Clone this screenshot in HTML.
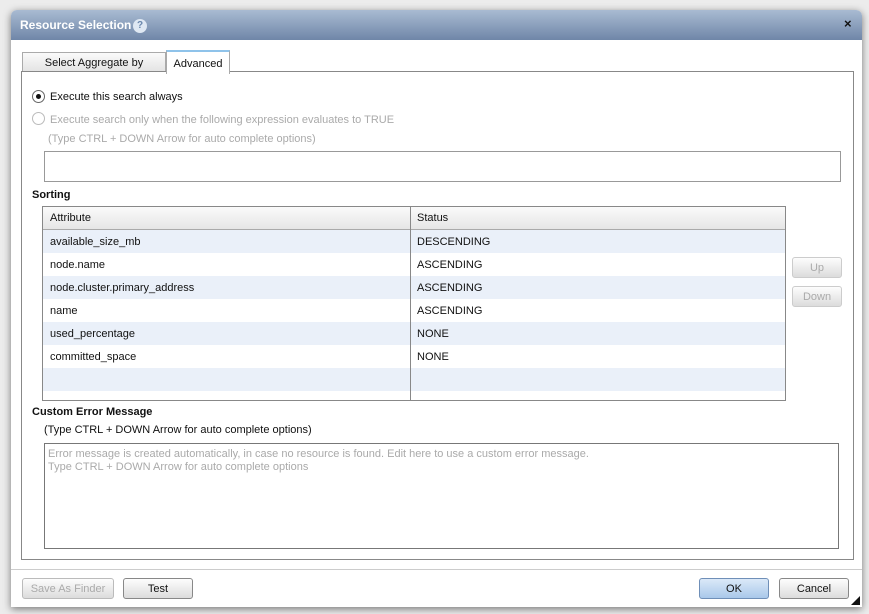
<!DOCTYPE html>
<html><head><style>
body{margin:0;width:869px;height:614px;background:#ececec;font-family:"Liberation Sans",Arial,sans-serif;font-size:11px;color:#111;position:relative;overflow:hidden}
.a{position:absolute}
.dlg{left:11px;top:10px;width:851px;height:597px;background:#fff;border-radius:6px 6px 0 0;box-shadow:0 2px 8px rgba(0,0,0,.5)}
.title{left:11px;top:10px;width:851px;height:30px;border-radius:6px 6px 0 0;background:linear-gradient(#a9bbd2,#6f86a8);color:#fff;font-weight:bold;font-size:12px}
.btn{position:absolute;height:19px;border:1px solid #888;border-radius:3px;background:linear-gradient(#fdfdfd,#dcdcdc);text-align:center;line-height:20px;font-size:11px}
.row{position:absolute;left:43px;width:742px;height:23px;line-height:24px}
.row span{position:absolute}
.gray{color:#aaa}
</style></head><body>
<div class="a dlg"></div>
<div class="a title"><span class="a" style="left:9px;top:8px">Resource Selection</span>
<span class="a" style="left:122px;top:9px;width:14px;height:14px;border-radius:50%;background:#dfe8f3;color:#6a87ad;font-size:10px;text-align:center;line-height:14px">?</span>
<span class="a" style="left:833px;top:6px;color:#111;font-size:13px">×</span></div>
<div class="a" style="left:22px;top:52px;width:142px;height:18px;border:1px solid #aaa;border-bottom:none;background:linear-gradient(#fafafa,#e4e4e4);text-align:center;line-height:20px">Select Aggregate by</div>
<div class="a" style="left:166px;top:50px;width:62px;height:22px;border:1px solid #aaa;border-top:2px solid #8fc3ea;border-bottom:none;background:#fff;text-align:center;line-height:24px;z-index:2">Advanced</div>
<div class="a" style="left:21px;top:71px;width:831px;height:487px;border:1px solid #888"></div>
<div class="a" style="left:32px;top:90px;width:11px;height:11px;border:1px solid #666;border-radius:50%;background:#fff"><div class="a" style="left:3px;top:3px;width:5px;height:5px;border-radius:50%;background:#111"></div></div>
<div class="a" style="left:50px;top:91px">Execute this search always</div>
<div class="a" style="left:32px;top:112px;width:11px;height:11px;border:1px solid #bbb;border-radius:50%"></div>
<div class="a gray" style="left:50px;top:114px">Execute search only when the following expression evaluates to TRUE</div>
<div class="a gray" style="left:48px;top:133px">(Type CTRL + DOWN Arrow for auto complete options)</div>
<div class="a" style="left:44px;top:151px;width:795px;height:29px;border:1px solid #999"></div>
<div class="a" style="left:32px;top:189px;font-weight:bold">Sorting</div>
<div class="a" style="left:42px;top:206px;width:742px;height:193px;border:1px solid #888;background:#fff"></div>
<div class="a" style="left:43px;top:207px;width:742px;height:22px;background:linear-gradient(#fafafa,#e6e6e6);border-bottom:1px solid #aaa;line-height:23px"><span class="a" style="left:7px">Attribute</span><span class="a" style="left:374px">Status</span></div>
<div class="row" style="top:230px;background:#eaf0f9"><span style="left:7px">available_size_mb</span><span style="left:374px">DESCENDING</span></div>
<div class="row" style="top:253px"><span style="left:7px">node.name</span><span style="left:374px">ASCENDING</span></div>
<div class="row" style="top:276px;background:#eaf0f9"><span style="left:7px">node.cluster.primary_address</span><span style="left:374px">ASCENDING</span></div>
<div class="row" style="top:299px"><span style="left:7px">name</span><span style="left:374px">ASCENDING</span></div>
<div class="row" style="top:322px;background:#eaf0f9"><span style="left:7px">used_percentage</span><span style="left:374px">NONE</span></div>
<div class="row" style="top:345px"><span style="left:7px">committed_space</span><span style="left:374px">NONE</span></div>
<div class="row" style="top:368px;background:#eaf0f9"></div>
<div class="a" style="left:410px;top:207px;width:1px;height:193px;background:#888"></div>
<div class="btn gray" style="left:792px;top:257px;width:48px;border-color:#ccc">Up</div>
<div class="btn gray" style="left:792px;top:286px;width:48px;border-color:#ccc">Down</div>
<div class="a" style="left:32px;top:406px;font-weight:bold">Custom Error Message</div>
<div class="a" style="left:44px;top:424px">(Type CTRL + DOWN Arrow for auto complete options)</div>
<div class="a gray" style="left:44px;top:443px;width:787px;height:96px;border:1px solid #777;padding:4px 3px;line-height:13px">Error message is created automatically, in case no resource is found. Edit here to use a custom error message.<br>Type CTRL + DOWN Arrow for auto complete options</div>
<div class="a" style="left:11px;top:569px;width:851px;height:1px;background:#ccc"></div>
<div class="btn gray" style="left:22px;top:578px;width:90px;border-color:#bbb">Save As Finder</div>
<div class="btn" style="left:123px;top:578px;width:68px">Test</div>
<div class="btn" style="left:699px;top:578px;width:68px;background:linear-gradient(#dbe9f8,#a9c8ea);border-color:#6f8fb8">OK</div>
<div class="btn" style="left:779px;top:578px;width:68px">Cancel</div>
<div class="a" style="left:851px;top:596px;width:0;height:0;border-left:9px solid transparent;border-bottom:9px solid #111"></div>
</body></html>
